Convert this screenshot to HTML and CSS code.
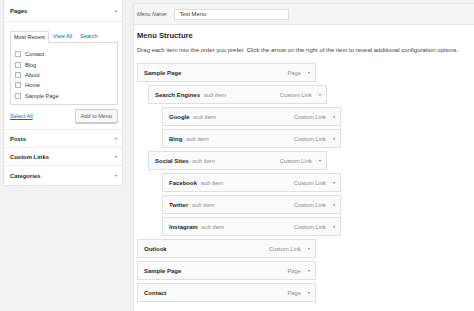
FILE: index.html
```html
<!DOCTYPE html>
<html>
<head>
<meta charset="utf-8">
<link rel="stylesheet" href="styles.css">
</head>
<body>
<div class="page">
  <aside class="side">
    <div class="panel">
      <div class="sec-head open"><span>Pages</span><span class="arr up"></span></div>
      <div class="sec-body">
        <div class="tabs">
          <span class="tab active">Most Recent</span>
          <span class="tab link">View All</span>
          <span class="tab link">Search</span>
        </div>
        <div class="tab-panel">
          <label class="chk"><span class="box"></span>Contact</label>
          <label class="chk"><span class="box"></span>Blog</label>
          <label class="chk"><span class="box"></span>About</label>
          <label class="chk"><span class="box"></span>Home</label>
          <label class="chk"><span class="box"></span>Sample Page</label>
        </div>
        <div class="actions">
          <span class="link sel">Select All</span>
          <span class="btn">Add to Menu</span>
        </div>
      </div>
      <div class="sec-head"><span>Posts</span><span class="arr"></span></div>
      <div class="sec-head"><span>Custom Links</span><span class="arr"></span></div>
      <div class="sec-head last"><span>Categories</span><span class="arr"></span></div>
    </div>
  </aside>
  <main class="main">
    <div class="name-bar">
      <span class="name-label">Menu Name</span>
      <span class="name-input">Test Menu</span>
    </div>
    <div class="body">
      <h2 class="title">Menu Structure</h2>
      <p class="desc">Drag each item into the order you prefer. Click the arrow on the right of the item to reveal additional configuration options.</p>
      <ul class="menu">
        <li class="item d0"><span class="t">Sample Page</span><span class="type">Page</span><span class="arr"></span></li>
        <li class="item d1"><span class="t">Search Engines <i>sub item</i></span><span class="type">Custom Link</span><span class="arr"></span></li>
        <li class="item d2"><span class="t">Google <i>sub item</i></span><span class="type">Custom Link</span><span class="arr"></span></li>
        <li class="item d2"><span class="t">Bing <i>sub item</i></span><span class="type">Custom Link</span><span class="arr"></span></li>
        <li class="item d1"><span class="t">Social Sites <i>sub item</i></span><span class="type">Custom Link</span><span class="arr"></span></li>
        <li class="item d2"><span class="t">Facebook <i>sub item</i></span><span class="type">Custom Link</span><span class="arr"></span></li>
        <li class="item d2"><span class="t">Twitter <i>sub item</i></span><span class="type">Custom Link</span><span class="arr"></span></li>
        <li class="item d2"><span class="t">Instagram <i>sub item</i></span><span class="type">Custom Link</span><span class="arr"></span></li>
        <li class="item d0"><span class="t">Outlook</span><span class="type">Custom Link</span><span class="arr"></span></li>
        <li class="item d0"><span class="t">Sample Page</span><span class="type">Page</span><span class="arr"></span></li>
        <li class="item d0"><span class="t">Contact</span><span class="type">Page</span><span class="arr"></span></li>
      </ul>
    </div>
  </main>
</div>
</body>
</html>
```

FILE: styles.css
```css
* { box-sizing: border-box; }
html, body { margin: 0; padding: 0; }
body {
  background: #f1f1f1;
  font-family: "Liberation Sans", Arial, sans-serif;
  color: #23282d;
  width: 474px;
  height: 311px;
  overflow: hidden;
}
.page {
  display: flex;
  align-items: flex-start;
  height: 311px;
}
.side {
  width: 120px;
  margin-left: 3px;
  flex: none;
}
.panel {
  background: #fff;
  border: 1px solid #e5e5e5;
  border-top: none;
}
.sec-head {
  height: 18px;
  display: flex;
  align-items: center;
  justify-content: space-between;
  padding: 0 5px 0 6px;
  font-size: 5.9px;
  font-weight: bold;
  border-bottom: 1px solid #eee;
}
.sec-head.open { height: 22px; }
.sec-head.last { border-bottom: none; height: 19px; }
.arr {
  width: 0; height: 0;
  border-left: 1.8px solid transparent;
  border-right: 1.8px solid transparent;
  border-top: 2.4px solid #72777c;
}
.arr.up { border-top: none; border-bottom: 2.4px solid #72777c; }
.sec-body {
  padding: 8px 4px 6px 6px;
  border-bottom: 1px solid #eee;
}
.tabs {
  display: flex;
  align-items: flex-end;
  height: 12px;
  font-size: 5.5px;
}
.tab { padding: 0 4px; line-height: 11px; }
.tab.active {
  border: 1px solid #ddd;
  border-bottom: none;
  background: #fff;
  margin-bottom: -1px;
  position: relative;
  z-index: 1;
  padding: 0 3px;
}
.link { color: #0073aa; }
.tab-panel {
  border: 1px solid #ddd;
  height: 63px;
  padding: 6px 0 0 4px;
}
.chk {
  display: flex;
  align-items: center;
  height: 10.4px;
  font-size: 5.6px;
  color: #32373c;
}
.box {
  width: 6px; height: 6px;
  border: 1px solid #b4b9be;
  background: #fff;
  margin-right: 4px;
  box-shadow: inset 0 1px 1px rgba(0,0,0,0.06);
}
.actions {
  display: flex;
  justify-content: space-between;
  align-items: center;
  margin-top: 4px;
  height: 14px;
  font-size: 5.5px;
}
.sel { text-decoration: underline; }
.btn {
  border: 1px solid #ccc;
  background: #f7f7f7;
  border-radius: 2px;
  height: 14px;
  line-height: 12px;
  padding: 0 5px;
  color: #555;
  box-shadow: 0 1px 0 #ccc;
}
.main {
  flex: 1;
  margin-left: 10px;
  margin-top: 3px;
  background: #fff;
  border-left: 1px solid #e5e5e5;
  border-top: 1px solid #e5e5e5;
  height: 308px;
}
.name-bar {
  height: 21px;
  background: #f5f5f5;
  border-bottom: 1px solid #e5e5e5;
  display: flex;
  align-items: center;
  padding-left: 3px;
}
.name-label {
  font-style: italic;
  font-size: 5.4px;
  color: #555;
  margin-right: 8px;
}
.name-input {
  width: 115px;
  height: 11px;
  background: #fff;
  border: 1px solid #ddd;
  font-size: 5.8px;
  line-height: 9px;
  padding-left: 4px;
  color: #32373c;
}
.body { padding: 6px 0 0 3px; }
.title {
  margin: 0;
  font-size: 7.6px;
  font-weight: bold;
  line-height: 10px;
  color: #23282d;
}
.desc {
  margin: 5px 0 0;
  font-size: 6px;
  line-height: 8px;
  color: #444;
  white-space: nowrap;
}
.menu {
  list-style: none;
  margin: 9px 0 0;
  padding: 0;
}
.item {
  width: 179px;
  height: 19px;
  margin-bottom: 3px;
  border: 1px solid #dfdfdf;
  background: #fafafa;
  display: flex;
  align-items: center;
  padding: 0 5px 0 6px;
  font-size: 6px;
}
.item.d1 { margin-left: 11px; }
.item.d2 { margin-left: 25px; }
.item .t { font-weight: bold; flex: 1; color: #23282d; }
.item .t i { font-weight: normal; color: #888; margin-left: 2px; }
.item .type { color: #888; font-size: 5.8px; margin-right: 7px; }
```
